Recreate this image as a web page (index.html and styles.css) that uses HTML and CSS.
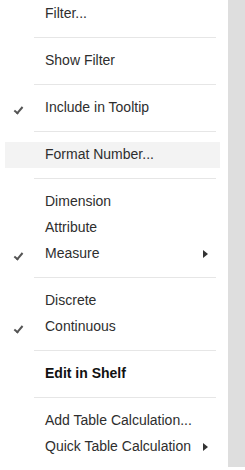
FILE: index.html
```html
<!DOCTYPE html>
<html lang="en">
<head>
    <meta charset="UTF-8">
    <meta name="viewport" content="width=device-width, initial-scale=1.0">
    <title>Field Menu</title>
    <link rel="stylesheet" href="styles.css">
</head>
<body>
    <div class="page">
        <ul class="menu">
            <li class="item">Filter...</li>
            <li class="sep"></li>
            <li class="item">Show Filter</li>
            <li class="sep"></li>
            <li class="item checked">Include in Tooltip</li>
            <li class="sep"></li>
            <li class="item hover">Format Number...</li>
            <li class="sep"></li>
            <li class="item">Dimension</li>
            <li class="item">Attribute</li>
            <li class="item checked sub">Measure</li>
            <li class="sep"></li>
            <li class="item">Discrete</li>
            <li class="item checked">Continuous</li>
            <li class="sep"></li>
            <li class="item bold">Edit in Shelf</li>
            <li class="sep"></li>
            <li class="item">Add Table Calculation...</li>
            <li class="item sub">Quick Table Calculation</li>
        </ul>
        <div class="side"></div>
    </div>
</body>
</html>
```

FILE: styles.css
```css
body {
    margin: 0;
    font-family: "Liberation Sans", Arial, sans-serif;
    background: #fff;
}
.page {
    display: flex;
    height: 467px;
}
.menu {
    list-style: none;
    margin: 0;
    padding: 1px 0 0 0;
    width: 228px;
    background: #fff;
}
.side {
    flex: 1;
    background: #dedede;
}
.item {
    position: relative;
    height: 26px;
    line-height: 25px;
    margin: 0 8px 0 5px;
    padding-left: 40px;
    font-size: 14px;
    color: #2e2e2e;
}
.item.hover {
    background: #f3f3f3;
}
.item.bold {
    font-weight: bold;
    color: #111;
}
.item.checked::before {
    content: "";
    position: absolute;
    left: 11px;
    top: 10px;
    width: 3px;
    height: 7px;
    border-right: 2px solid #555;
    border-bottom: 2px solid #555;
    transform: rotate(40deg);
}
.item.sub::after {
    content: "";
    position: absolute;
    left: 198px;
    top: 9px;
    border-left: 5px solid #333;
    border-top: 4px solid transparent;
    border-bottom: 4px solid transparent;
}
.sep {
    height: 1px;
    margin: 10px 12px 10px 34px;
    background: #e6e6e6;
}
```
